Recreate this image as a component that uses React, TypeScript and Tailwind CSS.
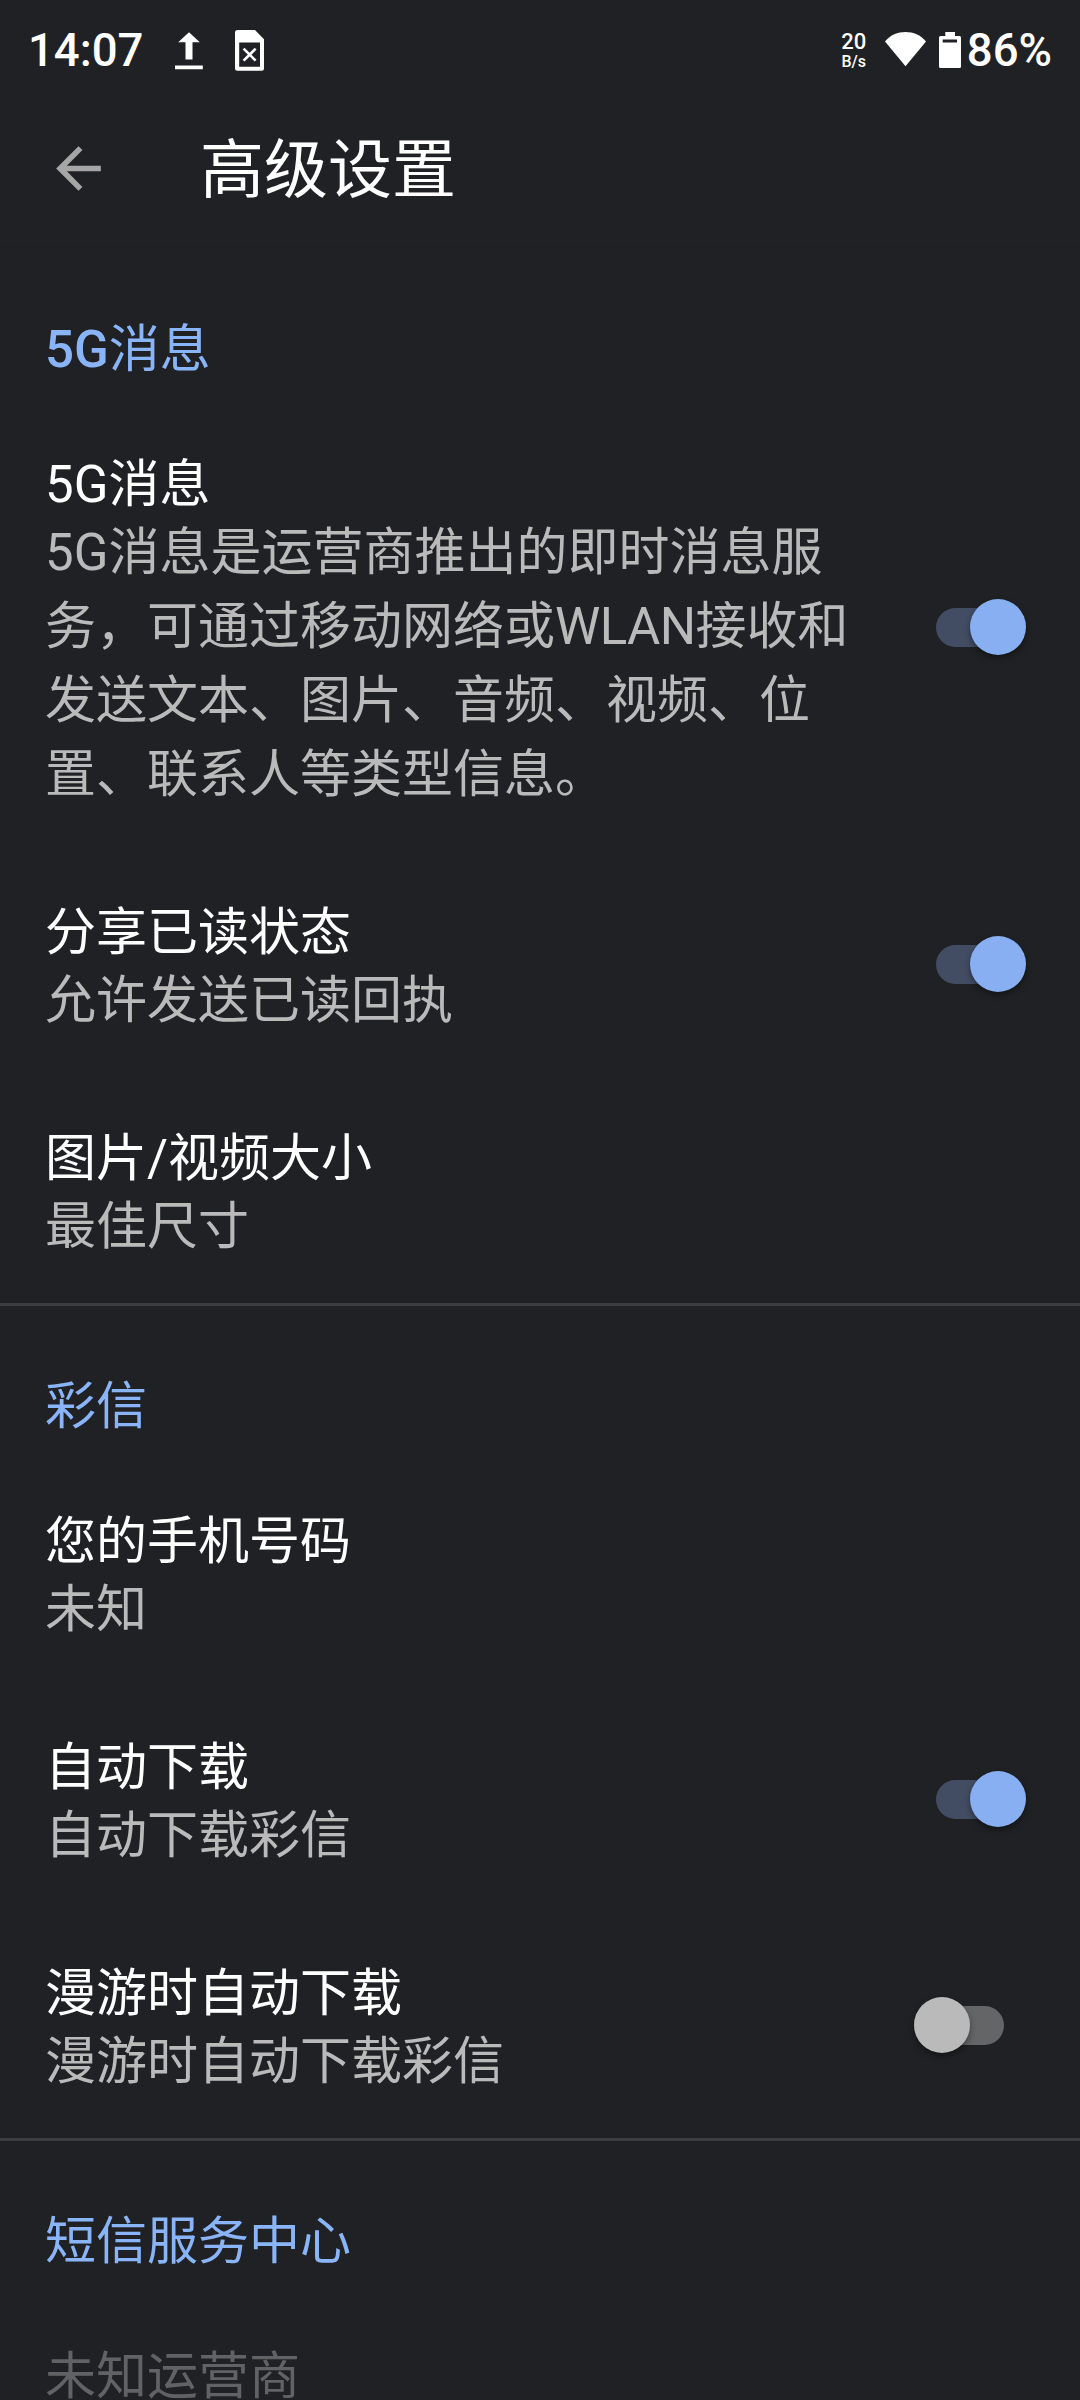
import clsx from "clsx";

type Item = {
  title: string;
  summary?: string[];
  checked?: boolean;
  disabled?: boolean;
};

type Section = {
  latin?: string;
  label: string;
  items: Item[];
};

const sections: Section[] = [
  {
    latin: "5G",
    label: "消息",
    items: [
      {
        title: "5G消息",
        summary: [
          "5G消息是运营商推出的即时消息服",
          "务，可通过移动网络或WLAN接收和",
          "发送文本、图片、音频、视频、位",
          "置、联系人等类型信息。"
        ],
        checked: true
      },
      { title: "分享已读状态", summary: ["允许发送已读回执"], checked: true },
      { title: "图片/视频大小", summary: ["最佳尺寸"] }
    ]
  },
  {
    label: "彩信",
    items: [
      { title: "您的手机号码", summary: ["未知"] },
      { title: "自动下载", summary: ["自动下载彩信"], checked: true },
      { title: "漫游时自动下载", summary: ["漫游时自动下载彩信"], checked: false }
    ]
  },
  {
    label: "短信服务中心",
    items: [{ title: "未知运营商", disabled: true }]
  }
];

function StatusBar() {
  return (
    <div className="flex h-[104px] shrink-0 items-center justify-between pb-[2px] pl-[28px] pr-[28px] text-white">
      <div className="flex items-center">
        <span className="w-[117px] text-[45.5px] font-medium leading-none">14:07</span>
        <svg className="ml-[30px] h-[40px] w-[28px]" viewBox="0 0 28 40" fill="currentColor">
          <path d="M14 1.2 3.2 11.2h7.3v17.2h7V11.2h7.3zM0 34.6h27.8v3.6H0z" />
        </svg>
        <svg className="ml-[32px] h-[42px] w-[30px]" viewBox="0 0 30 42" fill="none">
          <path
            d="M2.5 0H20l9 9.2v29a2.5 2.5 0 0 1-2.5 2.5h-24A2.5 2.5 0 0 1 0 38.2V2.5A2.5 2.5 0 0 1 2.5 0zM4.2 12.5v24.2h20.8V12.5z"
            fill="currentColor"
            fillRule="evenodd"
          />
          <path d="m8.6 18.7 12 12m0-12-12 12" stroke="currentColor" strokeWidth="2.6" />
        </svg>
      </div>
      <div className="flex items-center">
        <div className="flex w-[26px] flex-col items-center font-medium">
          <span className="text-[22px] leading-[21px]">20</span>
          <span className="text-[16px] leading-[20px]">B/s</span>
        </div>
        <svg className="ml-[18px] h-[40px] w-[42px]" viewBox="0 0 42 40" fill="currentColor">
          <path d="M20.5 35.3 0 10.5C5.5 4 12.5 1.1 20.5 1.1S35.5 4 41 10.5z" />
        </svg>
        <svg className="ml-[12px] h-[40px] w-[22px]" viewBox="0 0 22 40">
          <path
            d="M6.3 1h9.7v4h4.5A1.5 1.5 0 0 1 22 6.5v29a1.5 1.5 0 0 1-1.5 1.5h-19A1.5 1.5 0 0 1 0 35.5v-29A1.5 1.5 0 0 1 1.5 5h4.8zM3.7 8.6v3h14.3v-3z"
            fill="currentColor"
            fillRule="evenodd"
          />
        </svg>
        <span className="ml-[6px] text-[45.5px] font-medium leading-none">86%</span>
      </div>
    </div>
  );
}

function Toggle({ checked }: { checked: boolean }) {
  return (
    <div
      role="switch"
      aria-checked={checked}
      className={clsx(
        "mr-[76px] flex h-[39px] w-[68px] shrink-0 items-center rounded-full",
        checked ? "justify-end bg-[#424d64]" : "justify-start bg-[#646567]"
      )}
    >
      <div
        className={clsx(
          "h-[56px] w-[56px] shrink-0 rounded-full shadow-[0_3px_6px_rgba(0,0,0,0.4)]",
          checked ? "-mr-[22px] bg-[#87aff2]" : "-ml-[22px] bg-[#bababa]"
        )}
      />
    </div>
  );
}

function SummaryLine({ text }: { text: string }) {
  return (
    <div className="leading-[74px] text-[#bababb]">
      {text.split(/([A-Z]{3,})/).map((part, index) =>
        index % 2 ? (
          <span key={part} className="tracking-[-0.6px]">
            {part}
          </span>
        ) : (
          part
        )
      )}
    </div>
  );
}

function Row({ item }: { item: Item }) {
  return (
    <div className="flex items-center justify-between py-[39px] pl-[45px]">
      <div className="whitespace-nowrap pt-[12px] text-[51px]">
        <div className={clsx("leading-[62px]", item.disabled ? "text-[#616264]" : "text-white")}>{item.title}</div>
        {item.summary?.map((line) => (
          <SummaryLine key={line} text={line} />
        ))}
      </div>
      {item.checked !== undefined && <Toggle checked={item.checked} />}
    </div>
  );
}

export default function App() {
  return (
    <div
      lang="zh-CN"
      className="flex h-[2400px] w-[1080px] flex-col overflow-hidden bg-[#202124] font-[Roboto,'Noto_Sans_CJK_SC',sans-serif]"
    >
      <StatusBar />
      <header className="flex h-[143px] shrink-0 items-center border-b border-[#1d1e20] pb-[13px] pl-[45px] text-white">
        <svg className="h-[67px] w-[67px]" viewBox="0 0 24 24" fill="#a6a6a7">
          <path d="M20 11H7.83l5.59-5.59L12 4l-8 8 8 8 1.41-1.41L7.83 13H20v-2z" />
        </svg>
        <h1 className="ml-[88px] pt-[5px] text-[64px] leading-[96px]">高级设置</h1>
      </header>
      <main>
        {sections.map((section, index) => (
          <section key={section.label} className={clsx(index > 0 && "border-t-3 border-[#3c3d40]")}>
            <h2 className={clsx("pb-[15px] pl-[45px] text-[51px] leading-[76px] text-[#8ab4f8]", index > 0 ? "pt-[63px]" : "pt-[65px]")}>
              {section.latin && <span className="font-medium">{section.latin}</span>}
              {section.label}
            </h2>
            {section.items.map((item) => (
              <Row key={item.title} item={item} />
            ))}
          </section>
        ))}
      </main>
    </div>
  );
}
